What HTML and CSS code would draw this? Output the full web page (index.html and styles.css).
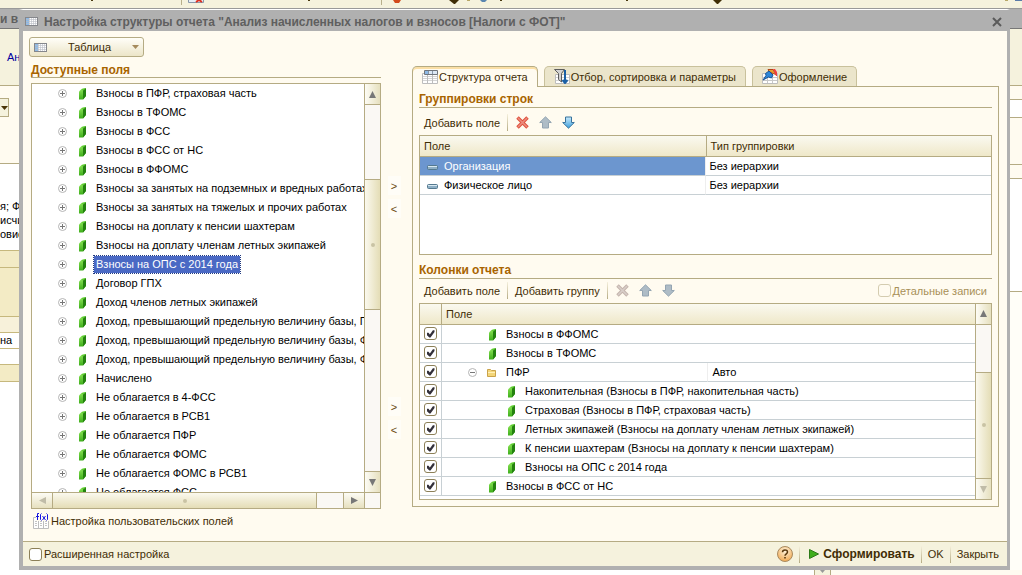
FILE: index.html
```html
<!DOCTYPE html>
<html lang="ru">
<head>
    <meta charset="utf-8">
    <title>Настройка структуры отчета</title>
    <link rel="stylesheet" href="styles.css">
</head>
<body>
    <!-- shared icons -->
    <svg class="icon-defs" width="0" height="0">
        <defs>
            <linearGradient id="greenFill" x1="0" x2="0" y1="0" y2="1">
                <stop offset="0" stop-color="#8ee858"/>
                <stop offset="1" stop-color="#3fae1c"/>
            </linearGradient>
            <linearGradient id="blueFill" x1="0" x2="0" y1="0" y2="1">
                <stop offset="0" stop-color="#c9eafc"/>
                <stop offset="1" stop-color="#3d9fdc"/>
            </linearGradient>
            <radialGradient id="helpFill" cx="0.5" cy="0.3" r="0.7">
                <stop offset="0" stop-color="#fff3dc"/>
                <stop offset="1" stop-color="#f0a850"/>
            </radialGradient>
            <symbol id="plus" viewBox="0 0 9 9">
                <circle cx="4.5" cy="4.5" r="4" fill="#fff" stroke="#b4b4b4"/>
                <path d="M2 4.5h5M4.5 2v5" stroke="#777"/>
            </symbol>
            <symbol id="minus" viewBox="0 0 9 9">
                <circle cx="4.5" cy="4.5" r="4" fill="#fff" stroke="#b4b4b4"/>
                <path d="M2 4.5h5" stroke="#777"/>
            </symbol>
            <symbol id="field" viewBox="0 0 7 12">
                <path d="M0 3.5L2.5 1L7 0V8L4 11.5H0Z" fill="url(#greenFill)"/>
                <path d="M4 2.5L7 0V8L4 11.5Z" fill="#24820f"/>
                <path d="M2.500 1L7 0L4 2.500Z" fill="#5cc832"/>
            </symbol>
            <symbol id="dash" viewBox="0 0 11 5">
                <rect x="0.5" y="0.5" width="10" height="4" rx="1" fill="#8fb0c6" stroke="#54798f"/>
                <path d="M1 1.5h9" stroke="#d8e8f0"/>
            </symbol>
            <symbol id="folder" viewBox="0 0 9 8">
                <path d="M0.5 7.5V0.5H3.5L4.5 1.5H8.5V7.5Z" fill="#f4d679" stroke="#c9a24a"/>
                <path d="M1 3.5h7" stroke="#fff0b8"/>
            </symbol>
            <symbol id="sheet" viewBox="0 0 13 9">
                <rect x="0.5" y="0.5" width="12" height="8" fill="#fff" stroke="#85878c"/>
                <rect x="1" y="1" width="3" height="7" fill="#8db9e6"/>
                <path d="M1 2.5h11M1 4.5h11M1 6.5h11M4.5 1v7M6.5 1v7M8.5 1v7M10.5 1v7" stroke="#b8bcc4" stroke-width="0.6"/>
            </symbol>
            <symbol id="grid" viewBox="0 0 16 14">
                <path d="M0.5 3.5h15v10h-15z" fill="#fff" stroke="#bdbdbd"/>
                <path d="M1 6.5h14M1 8.5h14M1 10.5h14" stroke="#d4d4d4"/>
                <path d="M5.5 4v9M10.5 4v9" stroke="#bdbdbd"/>
                <path d="M2.5 0.5h13v4h-13z" fill="#dce8f5" stroke="#70757c"/>
                <path d="M3 1h3v3H3z" fill="#8db9e6"/>
                <path d="M6.500 1v3M10.500 1v3" stroke="#8898aa"/>
            </symbol>
            <symbol id="cross" viewBox="0 0 13 13">
                <path d="M1.5 1.5L11.500 11.500M11.500 1.500L1.500 11.500" stroke="currentColor" stroke-width="3.500"/>
                <path d="M2 2L11 11M11 2L2 11" stroke="#fff" stroke-opacity="0.35" stroke-width="1.5"/>
            </symbol>
            <symbol id="arrowUp" viewBox="0 0 13 13">
                <path d="M6.5 0.8L12.3 6.5H9.5V12H3.5V6.5H0.7Z" fill="#aebcc6" stroke="#94a5b2"/>
            </symbol>
            <symbol id="arrowDown" viewBox="0 0 13 13">
                <path d="M6.5 12.2L12.3 6.5H9.5V1H3.5V6.5H0.7Z" fill="#aebcc6" stroke="#94a5b2"/>
            </symbol>
            <symbol id="arrowDownBlue" viewBox="0 0 13 13">
                <path d="M6.5 12.2L12.3 6.5H9.5V1H3.5V6.5H0.7Z" fill="url(#blueFill)" stroke="#39739c"/>
            </symbol>
        </defs>
    </svg>

    <div class="desktop">
        <div class="app-toolbar">
            <svg width="1022" height="8" viewBox="0 0 1022 8">
                <path d="M181.5 0v5M381.5 0v5" stroke="#b8b08c"/>
                <path d="M188.5 0v2.5h15V0" fill="#e8eef5" stroke="#8898aa"/>
                <path d="M196 2l3-2 3 2" fill="none" stroke="#e03020" stroke-width="2"/>
                <path d="M393 0h8l-2 3h-4z" fill="#d24a1c"/>
                <path d="M449 0h10l-4 4h-1zM713 0h9l-4 4h-1z" fill="#3f2d05"/>
                <path d="M480 0h7l-2 2h-3z" fill="#5a86b0"/>
                <path d="M467 0h3v1h-3zM1005 0h3v1h-3z" fill="#b8a868"/>
                <path d="M91 0h2v1h-2zM308 0h2v1h-2zM500 0h2v1h-2zM626 0h2v1h-2z" fill="#4a3a10"/>
                <path d="M1015 0h7v1h-7z" fill="#5a7aa8"/>
            </svg>
        </div>

        <div class="workspace">
            <div class="back-left">
                <div class="back-title">и в</div>
                <div class="back-head"><a href="#">Ан</a></div>
                <div class="back-form">
                    <button class="back-combo" aria-label="Выбрать">
                        <svg width="7" height="4"><path d="M0 0h7L3.500 4z" fill="#4a3508"/></svg>
                    </button>
                </div>
                <div class="back-text">я; Ф<br>исчи<br>овис</div>
                <div class="back-cell tint"></div>
                <div class="back-cell tint tall"></div>
                <div class="back-cell pale"></div>
                <div class="back-cell">на</div>
                <div class="back-cell"></div>
                <div class="back-cell tint"></div>
            </div>

            <div class="dialog">
                <div class="title-bar">
                    <svg width="13" height="9"><use href="#sheet"/></svg>
                    <h1>Настройка структуры отчета "Анализ начисленных налогов и взносов [Налоги с ФОТ]"</h1>
                    <button class="close" aria-label="Закрыть окно">
                        <svg width="10" height="10" viewBox="0 0 10 10"><path d="M1 1l8 8M9 1l-8 8" stroke="#5a5a5a" stroke-width="2"/></svg>
                    </button>
                </div>

                <div class="content">
                    <div class="left">
                        <button class="type-button">
                            <svg width="13" height="9"><use href="#sheet"/></svg>
                            <span>Таблица</span>
                            <svg width="7" height="4"><path d="M0 0h7L3.500 4z" fill="#a58a5c"/></svg>
                        </button>
                        <h2>Доступные поля</h2>
                        <div class="tree-box">
                            <ul class="tree">
                                <li><svg width="9" height="9"><use href="#plus"/></svg><svg width="7" height="12"><use href="#field"/></svg><span>Взносы в ПФР, страховая часть</span></li>
                                <li><svg width="9" height="9"><use href="#plus"/></svg><svg width="7" height="12"><use href="#field"/></svg><span>Взносы в ТФОМС</span></li>
                                <li><svg width="9" height="9"><use href="#plus"/></svg><svg width="7" height="12"><use href="#field"/></svg><span>Взносы в ФСС</span></li>
                                <li><svg width="9" height="9"><use href="#plus"/></svg><svg width="7" height="12"><use href="#field"/></svg><span>Взносы в ФСС от НС</span></li>
                                <li><svg width="9" height="9"><use href="#plus"/></svg><svg width="7" height="12"><use href="#field"/></svg><span>Взносы в ФФОМС</span></li>
                                <li><svg width="9" height="9"><use href="#plus"/></svg><svg width="7" height="12"><use href="#field"/></svg><span>Взносы за занятых на подземных и вредных работах</span></li>
                                <li><svg width="9" height="9"><use href="#plus"/></svg><svg width="7" height="12"><use href="#field"/></svg><span>Взносы за занятых на тяжелых и прочих работах</span></li>
                                <li><svg width="9" height="9"><use href="#plus"/></svg><svg width="7" height="12"><use href="#field"/></svg><span>Взносы на доплату к пенсии шахтерам</span></li>
                                <li><svg width="9" height="9"><use href="#plus"/></svg><svg width="7" height="12"><use href="#field"/></svg><span>Взносы на доплату членам летных экипажей</span></li>
                                <li><svg width="9" height="9"><use href="#plus"/></svg><svg width="7" height="12"><use href="#field"/></svg><span class="selected">Взносы на ОПС с 2014 года</span></li>
                                <li><svg width="9" height="9"><use href="#plus"/></svg><svg width="7" height="12"><use href="#field"/></svg><span>Договор ГПХ</span></li>
                                <li><svg width="9" height="9"><use href="#plus"/></svg><svg width="7" height="12"><use href="#field"/></svg><span>Доход членов летных экипажей</span></li>
                                <li><svg width="9" height="9"><use href="#plus"/></svg><svg width="7" height="12"><use href="#field"/></svg><span>Доход, превышающий предельную величину базы, П</span></li>
                                <li><svg width="9" height="9"><use href="#plus"/></svg><svg width="7" height="12"><use href="#field"/></svg><span>Доход, превышающий предельную величину базы, Ф</span></li>
                                <li><svg width="9" height="9"><use href="#plus"/></svg><svg width="7" height="12"><use href="#field"/></svg><span>Доход, превышающий предельную величину базы, Ф</span></li>
                                <li><svg width="9" height="9"><use href="#plus"/></svg><svg width="7" height="12"><use href="#field"/></svg><span>Начислено</span></li>
                                <li><svg width="9" height="9"><use href="#plus"/></svg><svg width="7" height="12"><use href="#field"/></svg><span>Не облагается в 4-ФСС</span></li>
                                <li><svg width="9" height="9"><use href="#plus"/></svg><svg width="7" height="12"><use href="#field"/></svg><span>Не облагается в РСВ1</span></li>
                                <li><svg width="9" height="9"><use href="#plus"/></svg><svg width="7" height="12"><use href="#field"/></svg><span>Не облагается ПФР</span></li>
                                <li><svg width="9" height="9"><use href="#plus"/></svg><svg width="7" height="12"><use href="#field"/></svg><span>Не облагается ФОМС</span></li>
                                <li><svg width="9" height="9"><use href="#plus"/></svg><svg width="7" height="12"><use href="#field"/></svg><span>Не облагается ФОМС в РСВ1</span></li>
                                <li><svg width="9" height="9"><use href="#plus"/></svg><svg width="7" height="12"><use href="#field"/></svg><span>Не облагается ФСС</span></li>
                            </ul>
                            <div class="vscroll tree-vscroll">
                                <button aria-label="Вверх"><svg width="7" height="7"><path d="M3.500 0L7 7H0z" fill="#777"/></svg></button>
                                <div class="track before"></div>
                                <div class="thumb"><i></i></div>
                                <div class="track after"></div>
                                <button aria-label="Вниз"><svg width="7" height="7"><path d="M0 0h7L3.500 7z" fill="#777"/></svg></button>
                            </div>
                            <div class="hscroll">
                                <button aria-label="Влево"><svg width="7" height="7"><path d="M7 0v7L0 3.500z" fill="#c0bca8"/></svg></button>
                                <div class="thumb"><i></i></div>
                                <div class="track"></div>
                                <button aria-label="Вправо"><svg width="7" height="7"><path d="M0 0v7L7 3.500z" fill="#777"/></svg></button>
                            </div>
                            <div class="corner"></div>
                        </div>
                        <button class="user-fields">
                            <svg width="16" height="16" viewBox="0 0 16 16">
                                <path d="M0.5 4.500h15v11h-15z" fill="#fff" stroke="#bdbdbd"/>
                                <path d="M5.500 5v10M10.500 5v10" stroke="#bdbdbd"/>
                                <path d="M2 8.500h2M2 10.500h2M2 12.500h2M7 8.500h2M7 10.500h2M7 12.500h2M12 8.500h2M12 10.500h2M12 12.500h2" stroke="#c4c4c4"/>
                                <rect x="3" y="0" width="13" height="8" fill="#fffbf0"/>
                                <path d="M6 0.500H4.500V7M3 3.500h3M8.500 0.500L7.500 1.500V6.500L8.500 7.500M9.500 3l3 4M12.500 3l-3 4M13.500 0.500L14.500 1.500V6.500L13.500 7.500" fill="none" stroke="#1414e0"/>
                            </svg>
                            <span>Настройка пользовательских полей</span>
                        </button>
                    </div>

                    <div class="movers">
                        <button>&gt;</button>
                        <button>&lt;</button>
                        <button class="second">&gt;</button>
                        <button>&lt;</button>
                    </div>

                    <div class="right">
                        <div class="tabs">
                            <button class="tab active">
                                <svg width="16" height="14"><use href="#grid"/></svg>
                                <span>Структура отчета</span>
                            </button>
                            <button class="tab">
                                <svg width="16" height="15" viewBox="0 0 16 15">
                                    <path d="M1.500 5.500h14v9h-14z" fill="#fff" stroke="#bdbdbd"/>
                                    <path d="M2 8.500h13M2 11.500h13" stroke="#d4d4d4"/>
                                    <path d="M0.500 0.500h10L7.500 4.500V13L4.500 10.500V4.500z" fill="#d2d2d2" stroke="#5c5c5c"/>
                                    <path d="M11 1v12M8.500 11l2.500 3 2.500-3" fill="none" stroke="#1a5fa5" stroke-width="2"/>
                                </svg>
                                <span>Отбор, сортировка и параметры</span>
                            </button>
                            <button class="tab">
                                <svg width="16" height="15" viewBox="0 0 16 15">
                                    <path d="M0.500 4.500h15v10h-15z" fill="#fff" stroke="#bdbdbd"/>
                                    <path d="M1 8.500h14M1 11.500h14M5.500 7v7M10.500 7v7" stroke="#c8c8c8"/>
                                    <path d="M6 0.500h5l3 5-3-1-4-2z" fill="#e8a030" stroke="#b04818"/>
                                    <path d="M11 0h2l2 3v4h-1z" fill="#f04040"/>
                                    <path d="M1 11L4 6.500L3.500 4.500L7 2l4 4-1.500 3-3-1z" fill="#2d87d8" stroke="#1a5596"/>
                                </svg>
                                <span>Оформление</span>
                            </button>
                        </div>

                        <div class="panel">
                            <h2>Группировки строк</h2>
                            <div class="toolbar">
                                <button>Добавить поле</button>
                                <i class="sep"></i>
                                <button class="icon red" aria-label="Удалить"><svg width="13" height="13"><use href="#cross"/></svg></button>
                                <button class="icon" aria-label="Вверх" disabled><svg width="13" height="13"><use href="#arrowUp"/></svg></button>
                                <button class="icon" aria-label="Вниз"><svg width="13" height="13"><use href="#arrowDownBlue"/></svg></button>
                            </div>
                            <div class="table-box groups">
                                <table>
                                    <thead>
                                        <tr><th>Поле</th><th>Тип группировки</th></tr>
                                    </thead>
                                    <tbody>
                                        <tr><td class="current"><svg width="11" height="5"><use href="#dash"/></svg>Организация</td><td>Без иерархии</td></tr>
                                        <tr><td><svg width="11" height="5"><use href="#dash"/></svg>Физическое лицо</td><td>Без иерархии</td></tr>
                                    </tbody>
                                </table>
                            </div>

                            <h2 class="columns-title">Колонки отчета</h2>
                            <div class="toolbar low">
                                <button>Добавить поле</button>
                                <i class="sep"></i>
                                <button>Добавить группу</button>
                                <i class="sep"></i>
                                <button class="icon faded" aria-label="Удалить" disabled><svg width="13" height="13"><use href="#cross"/></svg></button>
                                <button class="icon" aria-label="Вверх" disabled><svg width="13" height="13"><use href="#arrowUp"/></svg></button>
                                <button class="icon" aria-label="Вниз" disabled><svg width="13" height="13"><use href="#arrowDown"/></svg></button>
                                <label class="check details"><input type="checkbox" disabled>Детальные записи</label>
                            </div>
                            <div class="table-box columns">
                                <table>
                                    <colgroup>
                                        <col class="mark">
                                        <col class="name">
                                        <col>
                                    </colgroup>
                                    <thead>
                                        <tr><th></th><th colspan="2">Поле</th></tr>
                                    </thead>
                                    <tbody>
                                        <tr><td class="mark"><input type="checkbox" aria-label="Взносы в ФФОМС" checked></td><td class="level1" colspan="2"><svg width="7" height="12"><use href="#field"/></svg>Взносы в ФФОМС</td></tr>
                                        <tr><td class="mark"><input type="checkbox" aria-label="Взносы в ТФОМС" checked></td><td class="level1" colspan="2"><svg width="7" height="12"><use href="#field"/></svg>Взносы в ТФОМС</td></tr>
                                        <tr><td class="mark"><input type="checkbox" aria-label="ПФР" checked></td><td class="folder"><svg width="9" height="9"><use href="#minus"/></svg><svg width="9" height="8"><use href="#folder"/></svg>ПФР</td><td class="auto">Авто</td></tr>
                                        <tr><td class="mark"><input type="checkbox" aria-label="Накопительная" checked></td><td class="level2" colspan="2"><svg width="7" height="12"><use href="#field"/></svg>Накопительная (Взносы в ПФР, накопительная часть)</td></tr>
                                        <tr><td class="mark"><input type="checkbox" aria-label="Страховая" checked></td><td class="level2" colspan="2"><svg width="7" height="12"><use href="#field"/></svg>Страховая (Взносы в ПФР, страховая часть)</td></tr>
                                        <tr><td class="mark"><input type="checkbox" aria-label="Летных экипажей" checked></td><td class="level2" colspan="2"><svg width="7" height="12"><use href="#field"/></svg>Летных экипажей (Взносы на доплату членам летных экипажей)</td></tr>
                                        <tr><td class="mark"><input type="checkbox" aria-label="К пенсии шахтерам" checked></td><td class="level2" colspan="2"><svg width="7" height="12"><use href="#field"/></svg>К пенсии шахтерам (Взносы на доплату к пенсии шахтерам)</td></tr>
                                        <tr><td class="mark"><input type="checkbox" aria-label="Взносы на ОПС" checked></td><td class="level2" colspan="2"><svg width="7" height="12"><use href="#field"/></svg>Взносы на ОПС с 2014 года</td></tr>
                                        <tr><td class="mark"><input type="checkbox" aria-label="Взносы в ФСС от НС" checked></td><td class="level1" colspan="2"><svg width="7" height="12"><use href="#field"/></svg>Взносы в ФСС от НС</td></tr>
                                    </tbody>
                                </table>
                                <div class="vscroll">
                                    <button aria-label="Вверх"><svg width="7" height="7"><path d="M3.500 0L7 7H0z" fill="#777"/></svg></button>
                                    <div class="track before"></div>
                                    <div class="thumb"><i></i></div>
                                    <button aria-label="Вниз"><svg width="7" height="7"><path d="M0 0h7L3.500 7z" fill="#c0bca8"/></svg></button>
                                </div>
                            </div>
                        </div>
                    </div>
                </div>

                <div class="footer">
                    <label class="check"><input type="checkbox">Расширенная настройка</label>
                    <button class="help" aria-label="Справка">
                        <svg width="16" height="16" viewBox="0 0 16 16">
                            <circle cx="8" cy="8" r="7.500" fill="url(#helpFill)" stroke="#a88a60"/>
                            <path d="M5.500 6.200C5.500 3.200 10.500 3.200 10.500 6C10.500 7.800 8 7.800 8 9.800" fill="none" stroke="#5c3a10" stroke-width="1.500"/>
                            <path d="M7.200 11h1.600v1.600H7.200z" fill="#5c3a10"/>
                        </svg>
                    </button>
                    <i class="sep"></i>
                    <button class="run">
                        <svg width="10" height="10"><path d="M0.500 0.500L9.500 5L0.500 9.500z" fill="#3fae1c" stroke="#2c7a18"/></svg>
                        <span>Сформировать</span>
                    </button>
                    <i class="sep"></i>
                    <button>OK</button>
                    <i class="sep"></i>
                    <button>Закрыть</button>
                </div>
            </div>

            <div class="back-right">
                <div class="back-title"></div>
                <div class="back-head"></div>
                <div class="strip"></div>
                <div class="strip field"></div>
                <div class="strip gap"></div>
                <div class="strip"></div>
                <div class="strip list"></div>
            </div>
        </div>

        <div class="app-bottom">
            <div class="bottom-scroll"><svg width="5" height="3"><path d="M0 0h5L2.500 3z" fill="#999"/></svg></div>
            <div class="bottom-rest"></div>
        </div>
    </div>
</body>
</html>
```
FILE: styles.css
```css
* {
    box-sizing: border-box;
}

body {
    margin: 0;
    font-family: "Liberation Sans", Arial, sans-serif;
    font-size: 11px;
    color: #000;
    background: #fff;
}

svg {
    display: block;
    flex: none;
}

button {
    font: inherit;
    color: #3f2d05;
    background: none;
    border: none;
    padding: 0;
    white-space: nowrap;
}

h1,
h2 {
    margin: 0;
    font-size: 12px;
    font-weight: bold;
    white-space: nowrap;
}

.icon-defs {
    position: absolute;
}

.desktop {
    display: flex;
    flex-direction: column;
    height: 100vh;
    overflow: hidden;
}

.app-toolbar {
    flex: none;
    height: 9px;
    overflow: hidden;
    background: #f5f2dd;
    border-bottom: 1px solid #999;
}

.workspace {
    flex: 1;
    display: flex;
    min-height: 0;
}

/* windows behind the dialog */
.back-left {
    flex: none;
    width: 19px;
    overflow: hidden;
    background: #fff;
}

.back-right {
    flex: none;
    width: 12px;
    background: #fffef8;
}

.back-title {
    height: 20px;
    background: #b0b0b0;
    border-bottom: 1px solid #777;
    color: #5f5f5f;
    font-size: 12px;
    font-weight: bold;
    line-height: 20px;
    white-space: nowrap;
}

.back-head {
    height: 57px;
    padding: 22px 0 0 7px;
    background: #f5f2dd;
    border-bottom: 1px solid #b5ab83;
}

.back-head a {
    color: #0000a0;
    text-decoration: none;
}

.back-form {
    height: 78px;
    padding-top: 12px;
    background: #fffbf0;
    border-bottom: 1px solid #b5ab83;
}

.back-combo {
    display: flex;
    align-items: center;
    justify-content: center;
    width: 9px;
    height: 19px;
    background: #f5f2dd;
    border: 1px solid #b5ab83;
    border-left: none;
}

.back-text {
    height: 87px;
    padding-top: 35px;
    line-height: 14px;
    white-space: nowrap;
    border-bottom: 1px solid #c6b87d;
}

.back-cell {
    height: 16px;
    line-height: 15px;
    border-bottom: 1px solid #c6b87d;
}

.back-cell.tint {
    height: 17px;
    background: #f3ebc5;
}

.back-cell.tall {
    height: 49px;
}

.back-cell.pale {
    background: #f7f1da;
}

.strip {
    height: 14px;
    background: #fffbf0;
    border-bottom: 1px solid #b5ab83;
}

.strip.field {
    height: 18px;
    background: #fff;
}

.strip.gap {
    height: 47px;
}

.strip.list {
    height: 113px;
    background: #fff;
}

.app-bottom {
    flex: none;
    display: flex;
    justify-content: flex-end;
    height: 5px;
    overflow: hidden;
}

.bottom-scroll {
    display: flex;
    justify-content: center;
    width: 17px;
    background: #f5f2dd;
    border: solid #b5ab83;
    border-width: 0 1px;
}

.bottom-rest {
    width: 191px;
    background: #fffbf0;
}

/* dialog */
.dialog {
    flex: 1;
    display: flex;
    flex-direction: column;
    min-width: 0;
    border: solid #b0b0b0;
    border-width: 0 3px 4px 4px;
    border-top: 1px solid #fff;
    background: #fffbf0;
    box-shadow: 1px 0 0 #777, inset 0 -1px 0 #777;
}

.title-bar {
    display: flex;
    align-items: center;
    gap: 6px;
    height: 21px;
    padding: 2px 5px 0 2px;
    background: #b0b0b0;
}

.title-bar h1 {
    color: #5f5f5f;
}

.close {
    margin-left: auto;
}

.content {
    flex: 1;
    display: flex;
    min-height: 0;
    padding: 6px 8px 8px;
}

.left {
    flex: 350 1 0;
    display: flex;
    flex-direction: column;
    min-width: 0;
}

.type-button {
    display: flex;
    align-items: center;
    justify-content: space-between;
    width: 115px;
    height: 20px;
    margin-left: -2px;
    padding: 0 4px;
    border: 1px solid #b5ab83;
    border-radius: 3px;
    background: linear-gradient(#fffef8, #ece5c8);
}

h2 {
    height: 18px;
    line-height: 18px;
    color: #a86400;
    border-bottom: 1px solid #b5ab83;
}

.left h2 {
    margin-top: 4px;
    height: 17px;
}

.tree-box {
    flex: 1;
    display: grid;
    grid-template-columns: minmax(0, 1fr) 16px;
    grid-template-rows: minmax(0, 1fr) 16px;
    min-height: 0;
    margin-top: 5px;
    border: 1px solid #b5ab83;
    background: #fff;
}

.tree {
    margin: 0;
    padding: 0;
    list-style: none;
    overflow: hidden;
}

.tree li {
    display: flex;
    align-items: center;
    height: 19px;
    padding-left: 26px;
    white-space: nowrap;
}

.tree li svg + svg {
    margin-left: 12px;
}

.tree span {
    margin-left: 8px;
    padding: 0 2px;
    line-height: 17px;
}

.tree .selected {
    color: #fff;
    background: #4a69c4;
    outline: 1px dotted #223a80;
}

.vscroll {
    flex: none;
    display: flex;
    flex-direction: column;
    width: 16px;
    border-left: 1px solid #b5ab83;
    background: #faf8f4;
}

.vscroll button,
.hscroll button {
    display: flex;
    align-items: center;
    justify-content: center;
    flex: none;
    background: linear-gradient(90deg, #fdfcf5, #e6e0bf);
}

.vscroll button {
    height: 21px;
    border-bottom: 1px solid #b5ab83;
}

.vscroll button:last-child {
    border-top: 1px solid #b5ab83;
    border-bottom: none;
}

.thumb {
    display: flex;
    align-items: center;
    justify-content: center;
    background: linear-gradient(90deg, #fbf9ee, #e4ddb6);
}

.vscroll .thumb {
    flex: 130;
    border-top: 1px solid #b5ab83;
}

.thumb i {
    width: 4px;
    height: 4px;
    border-radius: 2px;
    background: #c9c3a4;
}

.tree-vscroll .before {
    flex: 74;
}

.tree-vscroll .after {
    flex: 161;
    border-top: 1px solid #b5ab83;
}

.hscroll {
    display: flex;
    border-top: 1px solid #b5ab83;
    background: #faf8f4;
}

.corner {
    border: solid #b5ab83;
    border-width: 1px 0 0 1px;
    background: #faf8f4;
}

.hscroll button {
    width: 21px;
    border-right: 1px solid #b5ab83;
    background: linear-gradient(#fdfcf5, #e6e0bf);
}

.hscroll button:last-child {
    border-left: 1px solid #b5ab83;
    border-right: none;
}

.hscroll .thumb {
    flex: 265;
    border-right: 1px solid #b5ab83;
    background: linear-gradient(#fbf9ee, #e4ddb6);
}

.hscroll .track {
    flex: 26;
}

.user-fields {
    display: flex;
    align-items: center;
    gap: 2px;
    height: 24px;
    padding-left: 2px;
}

.movers {
    flex: none;
    display: flex;
    flex-direction: column;
    align-items: center;
    gap: 4px;
    width: 31px;
    padding: 139px 5px 0 0;
}

.movers button {
    width: 13px;
    height: 19px;
    background: #fffdf7;
    color: #6a4a10;
}

.movers .second {
    margin-top: 175px;
}

.right {
    flex: 587 1 0;
    display: flex;
    flex-direction: column;
    min-width: 0;
    padding-top: 29px;
    padding-bottom: 26px;
}

.tabs {
    display: flex;
    gap: 6px;
}

.tab {
    display: flex;
    align-items: center;
    gap: 1px;
    height: 20px;
    padding: 0 9px;
    background: #ebe5cb;
    border: 1px solid #c9c19c;
    border-bottom: none;
    border-radius: 5px 5px 0 0;
}

.tab.active {
    height: 21px;
    margin-bottom: -1px;
    background: #fffbf0;
    border-color: #b5ab83;
    box-shadow: inset 0 2px 0 #fbdfa6;
    z-index: 1;
}

.panel {
    flex: 1;
    display: flex;
    flex-direction: column;
    min-height: 0;
    padding: 3px 6px 6px;
    border: 1px solid #b5ab83;
}

.toolbar {
    display: flex;
    align-items: center;
    flex: none;
    gap: 7px;
    height: 27px;
    padding: 2px 5px 0;
}

.toolbar.low {
    height: 24px;
    padding-top: 0;
}

.toolbar .icon {
    padding: 0 1px;
    margin-right: 1px;
}

.icon.red {
    color: #e0503c;
}

.icon.faded {
    color: #c4b4ac;
}

.sep {
    width: 1px;
    height: 17px;
    background: linear-gradient(#f5f0dc, #b5ab83);
}

.check {
    display: flex;
    align-items: center;
    gap: 2px;
    color: #3f2d05;
    white-space: nowrap;
}

.details {
    margin-left: auto;
    color: #a89058;
}

input[type="checkbox"] {
    appearance: none;
    display: grid;
    place-items: center;
    width: 13px;
    height: 13px;
    margin: 0;
    background: #fff;
    border: 1px solid #8c8058;
    border-radius: 3px;
}

input[type="checkbox"]:disabled {
    background: #fffbf0;
    border-color: #d4ccb0;
}

input[type="checkbox"]:checked::before {
    content: "";
    width: 8px;
    height: 8px;
    background: #33303a;
    clip-path: polygon(0 35%, 25% 35%, 42% 58%, 80% 5%, 100% 5%, 100% 25%, 50% 95%, 35% 95%, 0 60%);
}

.table-box {
    display: flex;
    min-height: 0;
    overflow: hidden;
    background: #fff;
    border: 1px solid #b5ab83;
}

.groups {
    flex: 119 1 0;
    align-items: flex-start;
}

.columns {
    flex: 197 1 0;
}

.columns table {
    align-self: flex-start;
}

.columns-title {
    margin-top: 6px;
}

table {
    flex: 1;
    width: 100%;
    min-width: 0;
    table-layout: fixed;
    border-collapse: separate;
    border-spacing: 0;
}

th {
    height: 21px;
    padding: 0 4px;
    font-weight: normal;
    text-align: left;
    color: #3f2d05;
    background: linear-gradient(#faf9f0, #efe8c9);
    border-bottom: 1px solid #b5ab83;
}

th + th {
    border-left: 1px solid #b5ab83;
}

td {
    height: 19px;
    padding: 0 4px;
    line-height: 18px;
    white-space: nowrap;
    border-bottom: 1px solid #c8d0d4;
}

td svg {
    display: inline-block;
    vertical-align: middle;
}

.groups td:first-child {
    padding-left: 7px;
    border-right: 1px solid #eee;
}

.groups td:first-child svg {
    margin-right: 6px;
}

.groups td.current {
    color: #fff;
    background: #6c96cf;
}

.mark {
    width: 21px;
}

.name {
    width: 48%;
}

td.mark + td {
    border-left: 1px solid #c8d0d4;
}

.columns .level1 {
    padding-left: 47px;
}

.columns .level2 {
    padding-left: 66px;
}

.level1 svg,
.level2 svg {
    margin-right: 10px;
}

.columns .folder {
    padding-left: 26px;
}

.folder svg {
    margin-right: 10px;
}

.auto {
    border-left: 1px solid #eee;
}

.columns .before {
    flex: 47;
}

.columns .thumb {
    flex: 105;
}

.footer {
    flex: none;
    display: flex;
    align-items: center;
    gap: 6px;
    height: 25px;
    padding: 0 8px 0 6px;
    background: #f5f2dd;
    border-top: 1px solid #b5ab83;
}

.help {
    margin-left: auto;
}

.run {
    display: flex;
    align-items: center;
    gap: 4px;
    margin-left: 3px;
    font-size: 12px;
    font-weight: bold;
}
```
